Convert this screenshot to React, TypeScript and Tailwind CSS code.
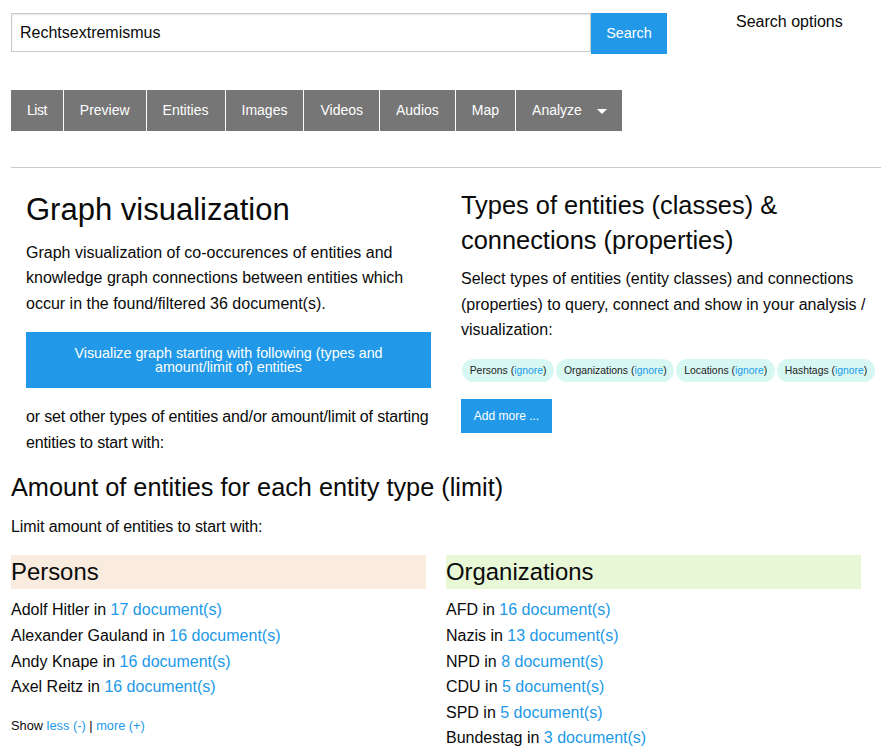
const tabs = ["List", "Preview", "Entities", "Images", "Videos", "Audios", "Map"];

const persons = [
  ["Adolf Hitler", "17"],
  ["Alexander Gauland", "16"],
  ["Andy Knape", "16"],
  ["Axel Reitz", "16"],
];

const organizations = [
  ["AFD", "16"],
  ["Nazis", "13"],
  ["NPD", "8"],
  ["CDU", "5"],
  ["SPD", "5"],
  ["Bundestag", "3"],
];

const chips = ["Persons", "Organizations", "Locations", "Hashtags"];

const Facet = ({ items }: { items: string[][] }) => (
  <ul className="mt-[8.2px]">
    {items.map(([name, count]) => (
      <li key={name} className="h-[25.6px] leading-[25.6px]">
        {name} in <a className="text-[#2199e8]">{count} document(s)</a>
      </li>
    ))}
  </ul>
);

export default function App() {
  return (
    <div className="h-[752px] overflow-hidden bg-white px-[11px] pr-[6px] font-['Liberation_Sans',sans-serif] text-[16px] text-[#0a0a0a]">
      <div className="flex items-start pt-[13px]">
        <input
          readOnly
          value="Rechtsextremismus"
          className="h-[39px] w-[580px] border border-[#cacaca] px-[8px] text-[16px] text-[#0a0a0a] shadow-[inset_0_1px_2px_rgba(10,10,10,0.1)] outline-none"
        />
        <button className="h-[41px] w-[76px] bg-[#2199e8] text-[14.4px] text-white">Search</button>
        <span className="ml-[69px] mt-[-1px] leading-[19px]">Search options</span>
      </div>

      <nav className="mt-[36px] flex h-[41px]">
        {tabs.map((tab) => (
          <a
            key={tab}
            className={
              tab === "List"
                ? "flex items-center border-r border-white bg-[#767676] px-[16px] text-[14px] tracking-[-0.5px] text-white"
                : "flex items-center border-r border-white bg-[#767676] px-[16px] text-[14px] text-white"
            }
          >
            {tab}
          </a>
        ))}
        <a className="flex items-center bg-[#767676] pl-[16px] pr-[15px] text-[14px] text-white">
          Analyze
          <span className="ml-[15px] mt-[2px] h-0 w-0 border-x-[5px] border-t-[5px] border-x-transparent border-t-white" />
        </a>
      </nav>

      <hr className="mt-[36px] border-t border-[#cacaca]" />

      <div className="grid grid-cols-2">
        <div className="px-[15px]">
          <h1 className="mt-[22px] text-[31px] leading-[40px]">Graph visualization</h1>
          <p className="mt-[9.6px] leading-[25.6px]">
            Graph visualization of co-occurences of entities and knowledge graph connections between entities which
            occur in the found/filtered 36 document(s).
          </p>
          <button className="mt-[16px] block h-[56px] w-full bg-[#2199e8] px-[32px] text-[14.3px] leading-[14.4px] text-white">
            Visualize graph starting with following (types and amount/limit of) entities
          </button>
          <p className="mt-[16px] leading-[25.6px] tracking-[-0.15px]">
            or set other types of entities and/or amount/limit of starting entities to start with:
          </p>
        </div>

        <div className="px-[15px]">
          <h2 className="mt-[20px] text-[25.4px] leading-[35px]">Types of entities (classes) &amp; connections (properties)</h2>
          <p className="mt-[8px] leading-[25.6px]">
            Select types of entities (entity classes) and connections (properties) to query, connect and show in your
            analysis / visualization:
          </p>
          <div className="mt-[16px] ml-[1px] flex gap-[2px] whitespace-nowrap">
            {chips.map((chip) => (
              <span key={chip} className="flex h-[23px] items-center rounded-full bg-[#d7f8f2] px-[7.7px] pt-[1px] text-[10.4px] text-[#222]">
                {chip} (<a className="text-[#2199e8]">ignore</a>)
              </span>
            ))}
          </div>
          <button className="mt-[17px] block h-[34px] w-[91px] bg-[#2199e8] text-[12px] text-white">Add more ...</button>
        </div>
      </div>

      <h2 className="mt-[14px] text-[25.3px] leading-[35px]">Amount of entities for each entity type (limit)</h2>
      <p className="mt-[9px] leading-[25.6px] tracking-[-0.1px]">Limit amount of entities to start with:</p>

      <div className="mt-[16px] grid grid-cols-2">
        <div className="pr-[20px]">
          <h3 className="h-[34px] bg-[#f9ecdf] text-[23.9px] leading-[34px]">Persons</h3>
          <Facet items={persons} />
          <p className="mt-[15.8px] text-[12.8px] leading-[20px]">
            Show <a className="text-[#2199e8]">less (-)</a> | <a className="text-[#2199e8]">more (+)</a>
          </p>
        </div>
        <div className="pr-[20px]">
          <h3 className="h-[34px] bg-[#e8f8d7] text-[23.9px] leading-[34px]">Organizations</h3>
          <Facet items={organizations} />
        </div>
      </div>
    </div>
  );
}
